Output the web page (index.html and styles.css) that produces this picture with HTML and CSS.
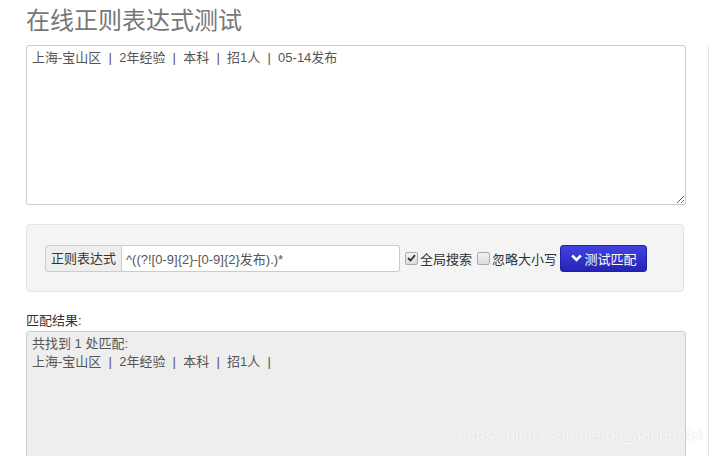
FILE: index.html
```html
<!DOCTYPE html>
<html lang="zh-CN">
<head>
    <meta charset="UTF-8">
    <title>在线正则表达式测试</title>
    <link rel="stylesheet" href="styles.css">
</head>
<body>
    <div class="page">
        <div class="main">
            <h1 class="title">在线正则表达式测试</h1>

            <!-- Source text -->
            <textarea class="source">上海-宝山区 &nbsp;|&nbsp; 2年经验 &nbsp;|&nbsp; 本科 &nbsp;|&nbsp; 招1人 &nbsp;|&nbsp; 05-14发布</textarea>

            <div class="well">
                <div class="input-group">
                    <span class="addon">正则表达式</span>
                    <input type="text" class="regex-input" value="^((?![0-9]{2}-[0-9]{2}发布).)*">
                </div>
                <label class="check">
                    <span class="box"><svg width="9" height="8" viewBox="0 0 9 8"><path d="M1 4 L3.5 6.5 L8 1.2" fill="none" stroke="#333" stroke-width="1.8"/></svg></span>全局搜索
                </label>
                <label class="check"><span class="box"></span>忽略大小写</label>
                <button class="btn-primary">
                    <svg class="chevron" width="11" height="8" viewBox="0 0 11 8"><path d="M1.2 1.5 L5.5 5.8 L9.8 1.5" fill="none" stroke="#fff" stroke-width="2.6"/></svg>测试匹配
                </button>
            </div>

            <div class="result-label">匹配结果:</div>
            <div class="result">
                <div>共找到 1 处匹配:</div>
                <div>上海-宝山区 &nbsp;|&nbsp; 2年经验 &nbsp;|&nbsp; 本科 &nbsp;|&nbsp; 招1人 &nbsp;|</div>
                <span class="watermark">https://blog.csdn.net/qq_38966984</span>
            </div>
        </div>
        <div class="side"></div>
    </div>
</body>
</html>
```

FILE: styles.css
```css
body {
    margin: 0;
    font-family: "Liberation Sans", "Noto Sans CJK SC", sans-serif;
    font-size: 13px;
    color: #333;
    background: #fff;
    overflow: hidden;
}

.page {
    display: flex;
    height: 456px;
}

.main {
    padding-left: 26px;
    width: 660px;
}

.side {
    flex: 1;
    margin-left: 22px;
    margin-top: 45px;
    border-left: 1px solid #e3e3e3;
}

.title {
    margin: 0;
    padding-top: 6px;
    font-size: 24px;
    line-height: 30px;
    font-weight: normal;
    color: #777;
}

.source {
    display: block;
    box-sizing: border-box;
    width: 660px;
    height: 160px;
    margin-top: 9px;
    padding: 3px 5px;
    border: 1px solid #ccc;
    border-radius: 3px;
    font-family: inherit;
    font-size: 13px;
    line-height: 18px;
    color: #555;
    resize: vertical;
}

.well {
    box-sizing: border-box;
    width: 658px;
    height: 68px;
    margin-top: 19px;
    padding: 0 18px;
    background: #f4f4f4;
    border: 1px solid #e3e3e3;
    border-radius: 4px;
    display: flex;
    align-items: center;
}

.input-group {
    display: flex;
    width: 355px;
    height: 27px;
}

.addon {
    box-sizing: border-box;
    padding: 0 5px;
    line-height: 25px;
    white-space: nowrap;
    background: #eee;
    border: 1px solid #ccc;
    border-radius: 3px 0 0 3px;
    color: #333;
}

.regex-input {
    flex: 1;
    min-width: 0;
    box-sizing: border-box;
    height: 27px;
    margin: 0;
    padding: 0 4px;
    border: 1px solid #ccc;
    border-left: none;
    border-radius: 0 3px 3px 0;
    font-family: inherit;
    font-size: 13px;
    color: #555;
    outline: none;
}

.check {
    display: flex;
    align-items: center;
    margin-left: 5px;
    white-space: nowrap;
    color: #333;
}

.box {
    box-sizing: border-box;
    width: 13px;
    height: 13px;
    margin-right: 2px;
    border: 1px solid #aaa;
    border-radius: 2px;
    background: linear-gradient(#f2f2f2, #dcdcdc);
    display: flex;
    align-items: center;
    justify-content: center;
}

.btn-primary {
    box-sizing: border-box;
    height: 27px;
    width: 87px;
    margin-left: 3px;
    padding: 0;
    border: 1px solid #2020a0;
    border-radius: 3px;
    background: linear-gradient(#4242e2, #2424b4);
    color: #fff;
    font-family: inherit;
    font-size: 13px;
    display: flex;
    align-items: center;
    justify-content: center;
}

.chevron {
    margin-right: 3px;
}

.result-label {
    margin-top: 20px;
    line-height: 18px;
    color: #333;
}

.result {
    position: relative;
    box-sizing: border-box;
    width: 660px;
    height: 140px;
    margin-top: 1px;
    padding: 3px 5px;
    line-height: 18px;
    background: #eee;
    border: 1px solid #ccc;
    border-radius: 3px;
    color: #555;
}

.watermark {
    position: absolute;
    left: 431px;
    top: 95px;
    font-family: "Liberation Sans", sans-serif;
    font-size: 16px;
    color: rgba(255, 255, 255, 0.85);
    text-shadow: 0 0 1px rgba(0, 0, 0, 0.12);
    white-space: nowrap;
}
```
